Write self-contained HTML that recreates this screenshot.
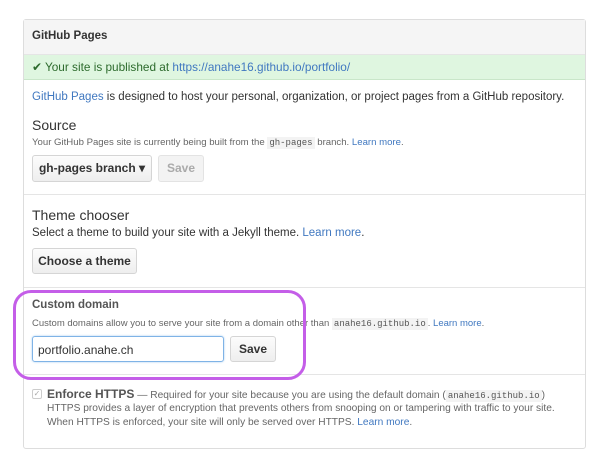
<!DOCTYPE html>
<html><head><meta charset="utf-8"><style>
*{margin:0;padding:0;box-sizing:border-box}
body{width:609px;height:460px;background:#fff;font-family:"Liberation Sans",Helvetica,Arial,sans-serif;color:#333;position:relative;overflow:hidden}
.a{position:absolute;white-space:nowrap}
.box{position:absolute;left:23px;top:19px;width:563px;height:430px;border:1px solid #ddd;border-radius:3px}
.hdr{position:absolute;left:0;top:0;width:561px;height:35px;background:#f5f5f5;border-bottom:1px solid #e5e5e5}
.grn{position:absolute;left:0;top:35px;width:561px;height:25px;background:#dff6e0;border-bottom:1px solid #c9e6c9}
.sep{position:absolute;left:0;width:561px;height:1px;background:#e5e5e5}
.l{color:#4078c0}
.btn{position:absolute;border:1px solid #d5d5d5;border-radius:3px;background:linear-gradient(#fcfcfc,#eee);font-weight:bold;font-size:12px;color:#333;text-align:center}
code{font-family:"Liberation Mono",monospace;font-size:9px;background:#f3f3f3;padding:1px 2px;color:#555}
h3{font-size:14px;font-weight:normal;color:#333}
.s{font-size:9.6px;color:#666}
</style></head><body>
<div class="box">
 <div class="hdr"><div class="a" style="left:8px;top:10px;font-size:11.5px;font-weight:bold;color:#333">GitHub Pages</div></div>
 <div class="grn"><div class="a" style="left:8px;top:5px;font-size:11.8px;color:#2d6b2d">✔ Your site is published at <span class="l">https://anahe16.github.io/portfolio/</span></div></div>
 <div class="sep" style="top:174px"></div>
 <div class="sep" style="top:267px"></div>
 <div class="sep" style="top:354px"></div>
</div>
<div class="a" style="left:32px;top:91px;font-size:11.5px;color:#333"><span class="l">GitHub Pages</span> is designed to host your personal, organization, or project pages from a GitHub repository.</div>
<div class="a" style="left:32px;top:117px"><h3>Source</h3></div>
<div class="a s" style="left:32px;top:137px">Your GitHub Pages site is currently being built from the <code>gh-pages</code> branch. <span class="l">Learn more</span>.</div>
<div class="btn" style="left:32px;top:155px;width:120px;height:27px;line-height:25px">gh-pages branch ▾</div>
<div class="btn" style="left:158px;top:155px;width:46px;height:27px;line-height:25px;color:#aaa;background:#f3f3f3;border-color:#e3e3e3">Save</div>
<div class="a" style="left:32px;top:207px"><h3>Theme chooser</h3></div>
<div class="a" style="left:32px;top:227px;font-size:11.5px;color:#333">Select a theme to build your site with a Jekyll theme. <span class="l">Learn more</span>.</div>
<div class="btn" style="left:32px;top:248px;width:105px;height:26px;line-height:24px">Choose a theme</div>
<div class="a" style="left:32px;top:299px;font-size:11.5px;font-weight:bold;color:#555">Custom domain</div>
<div class="a" style="left:32px;top:318px;font-size:9.5px;color:#666">Custom domains allow you to serve your site from a domain other than <code>anahe16.github.io</code>. <span class="l">Learn more</span>.</div>
<div class="a" style="left:32px;top:336px;width:192px;height:26px;border:1px solid #7fb3e6;border-radius:3px;box-shadow:0 0 2px #a9cdf0;font-size:12px;color:#333;padding:6px 5px">portfolio.anahe.ch</div>
<div class="btn" style="left:230px;top:336px;width:46px;height:26px;line-height:24px">Save</div>
<div class="a" style="left:13px;top:290px;width:293px;height:90px;border:3.5px solid #c45ee8;border-radius:18px"></div>
<div class="a" style="left:32px;top:389px;width:10px;height:10px;border:1px solid #ccc;border-radius:2px;font-size:8px;color:#aaa;line-height:8px;text-align:center">✓</div>
<div class="a" style="left:47px;top:387px;font-size:10.2px;color:#666"><b style="font-size:12px;color:#555">Enforce HTTPS</b> — Required for your site because you are using the default domain (<code>anahe16.github.io</code>)</div>
<div class="a" style="left:47px;top:403px;font-size:10.2px;color:#666">HTTPS provides a layer of encryption that prevents others from snooping on or tampering with traffic to your site.</div>
<div class="a" style="left:47px;top:417px;font-size:10.2px;color:#666">When HTTPS is enforced, your site will only be served over HTTPS. <span class="l">Learn more</span>.</div>
</body></html>
